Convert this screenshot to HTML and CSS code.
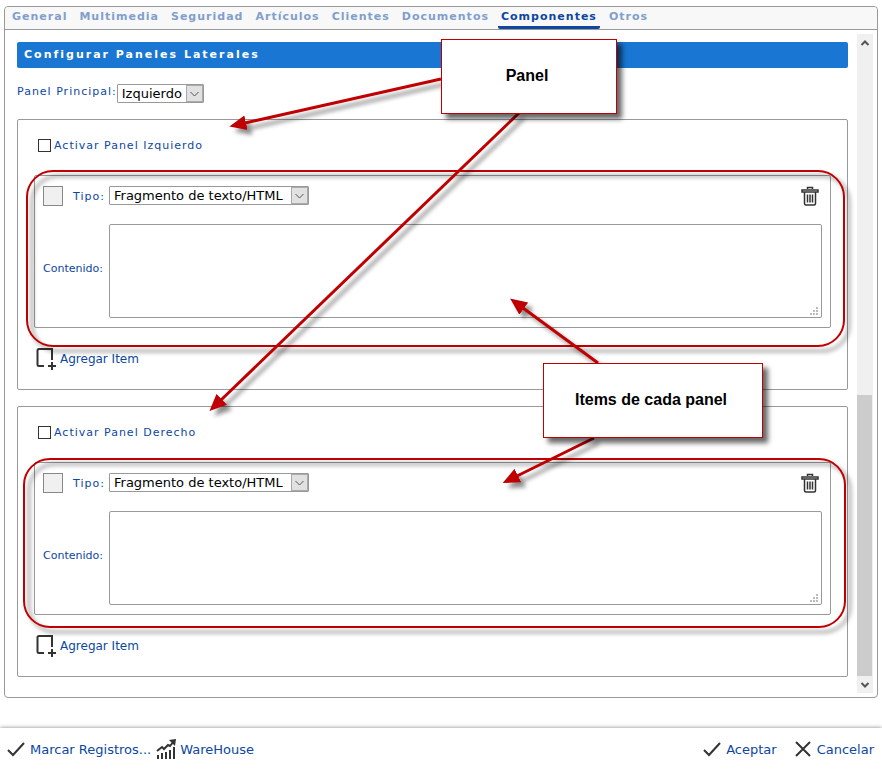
FILE: index.html
```html
<!DOCTYPE html>
<html lang="es">
<head>
    <meta charset="UTF-8">
    <meta name="viewport" content="width=device-width, initial-scale=1.0">
    <title>Configurar Paneles Laterales</title>
    <link rel="stylesheet" href="styles.css">
</head>
<body>
    <main class="window">
        <nav class="tabs">
            <a href="#">General</a>
            <a href="#">Multimedia</a>
            <a href="#">Seguridad</a>
            <a href="#">Artículos</a>
            <a href="#">Clientes</a>
            <a href="#">Documentos</a>
            <a href="#" class="active">Componentes</a>
            <a href="#">Otros</a>
        </nav>
        <div class="window-body">
            <div class="content">
                <h1>Configurar Paneles Laterales</h1>
                <div class="main-panel">
                    <label for="mainPanel">Panel Principal:</label>
                    <span class="select-box">
                        <select id="mainPanel"><option>Izquierdo</option><option>Derecho</option></select>
                        <svg class="select-arrow" viewBox="0 0 15 15"><path d="M3.500 6l4 4 4-4"/></svg>
                    </span>
                </div>

                <section class="panel">
                    <div class="activate">
                        <input type="checkbox" id="activeLeft">
                        <label for="activeLeft">Activar Panel Izquierdo</label>
                    </div>
                    <div class="item">
                        <div class="item-type">
                            <button type="button" class="color" aria-label="Color"></button>
                            <label for="typeLeft">Tipo:</label>
                        </div>
                        <div class="item-head">
                            <span class="select-box wide">
                                <select id="typeLeft"><option>Fragmento de texto/HTML</option></select>
                                <svg class="select-arrow" viewBox="0 0 15 15"><path d="M3.500 6l4 4 4-4"/></svg>
                            </span>
                            <button type="button" class="delete" aria-label="Eliminar">
                                <svg viewBox="0 0 18 20"><path d="M6.500 3V1.500h5V3M1 4h16v2H1zM3.500 6v11.500q0 1.500 1.500 1.500h8q1.500 0 1.500-1.500V6M6.500 8.500v8M9 8.500v8M11.500 8.500v8"/></svg>
                            </button>
                        </div>
                        <label class="content-label" for="contentLeft">Contenido:</label>
                        <div class="text-box">
                            <textarea id="contentLeft"></textarea>
                            <svg class="grip" viewBox="0 0 8 8"><path d="M6 0h2v2H6zM3 3h2v2H3zM6 3h2v2H6zM0 6h2v2H0zM3 6h2v2H3zM6 6h2v2H6z"/></svg>
                        </div>
                    </div>
                    <button type="button" class="add-item">
                        <svg viewBox="0 0 20 22"><path d="M8 18H3q-1.500 0-1.500-1.500v-14Q1.500 1 3 1h13v11M16 14v8M12 18h8"/></svg>
                        Agregar Item
                    </button>
                </section>

                <section class="panel">
                    <div class="activate">
                        <input type="checkbox" id="activeRight">
                        <label for="activeRight">Activar Panel Derecho</label>
                    </div>
                    <div class="item">
                        <div class="item-type">
                            <button type="button" class="color" aria-label="Color"></button>
                            <label for="typeRight">Tipo:</label>
                        </div>
                        <div class="item-head">
                            <span class="select-box wide">
                                <select id="typeRight"><option>Fragmento de texto/HTML</option></select>
                                <svg class="select-arrow" viewBox="0 0 15 15"><path d="M3.500 6l4 4 4-4"/></svg>
                            </span>
                            <button type="button" class="delete" aria-label="Eliminar">
                                <svg viewBox="0 0 18 20"><path d="M6.500 3V1.500h5V3M1 4h16v2H1zM3.500 6v11.500q0 1.500 1.500 1.500h8q1.500 0 1.500-1.500V6M6.500 8.500v8M9 8.500v8M11.500 8.500v8"/></svg>
                            </button>
                        </div>
                        <label class="content-label" for="contentRight">Contenido:</label>
                        <div class="text-box">
                            <textarea id="contentRight"></textarea>
                            <svg class="grip" viewBox="0 0 8 8"><path d="M6 0h2v2H6zM3 3h2v2H3zM6 3h2v2H6zM0 6h2v2H0zM3 6h2v2H3zM6 6h2v2H6z"/></svg>
                        </div>
                    </div>
                    <button type="button" class="add-item">
                        <svg viewBox="0 0 20 22"><path d="M8 18H3q-1.500 0-1.500-1.500v-14Q1.500 1 3 1h13v11M16 14v8M12 18h8"/></svg>
                        Agregar Item
                    </button>
                </section>
            </div>
            <div class="scrollbar">
                <button type="button" aria-label="Subir"><svg viewBox="0 0 16 17"><path d="M4.500 11L8 7.500l3.500 3.500"/></svg></button>
                <div class="track"><div class="thumb"></div></div>
                <button type="button" aria-label="Bajar"><svg viewBox="0 0 16 17"><path d="M4.500 7L8 10.500 11.500 7"/></svg></button>
            </div>
        </div>
    </main>

    <footer class="actions">
        <button type="button">
            <svg viewBox="0 0 20 20"><path d="M2 11l5 5L18 4"/></svg>
            Marcar Registros...
        </button>
        <button type="button">
            <svg viewBox="0 0 20 20"><path d="M2 20v-4M6 20v-6M10 20v-7M14 20v-9M18 20V8M1 12l5-4 2 2 4-4 2 1 4-5"/><path class="fill" d="M13 1l7-1-1 7z"/></svg>
            WareHouse
        </button>
        <button type="button" class="accept">
            <svg viewBox="0 0 20 20"><path d="M2 11l5 5L18 4"/></svg>
            Aceptar
        </button>
        <button type="button">
            <svg viewBox="0 0 20 20"><path d="M3 3l14 14M17 3L3 17"/></svg>
            Cancelar
        </button>
    </footer>

    <!-- notes drawn over the form -->
    <svg class="notes" viewBox="0 0 882 770">
        <defs>
            <marker id="head" markerUnits="userSpaceOnUse" markerWidth="18" markerHeight="16" refX="1" refY="8" orient="auto">
                <path d="M0 0.500L17 8 0 15.500z" fill="#c00000"/>
            </marker>
        </defs>
        <g class="outlines">
            <rect x="27" y="171" width="817" height="175" rx="26"/>
            <rect x="24" y="459" width="821" height="168" rx="26"/>
        </g>
        <g class="arrows">
            <path d="M441 79L245 123"/>
            <path d="M519 113L221 400"/>
            <path d="M598 363L523 308"/>
            <path d="M594 438L517 476"/>
        </g>
    </svg>
    <div class="callout callout-panel">Panel</div>
    <div class="callout callout-items">Items de cada panel</div>
</body>
</html>
```

FILE: styles.css
```css
* {
    box-sizing: border-box;
}

body {
    position: relative;
    display: flex;
    flex-direction: column;
    min-height: 100vh;
    margin: 0;
    background: #fff;
    color: #0d47a1;
    font-family: Verdana, "DejaVu Sans", sans-serif;
    font-size: 11px;
}

button, select, textarea {
    font-family: inherit;
    margin: 0;
    padding: 0;
}

button {
    border: none;
    background: none;
    color: inherit;
    cursor: pointer;
}

svg {
    display: block;
    fill: none;
    stroke: #333;
    stroke-width: 2;
}

.window {
    flex: 1;
    display: flex;
    flex-direction: column;
    margin: 6px 4px 30px;
    border: 1px solid #999;
    border-radius: 4px;
}

.tabs {
    display: flex;
    height: 23px;
    gap: 6px;
    padding: 0 4px;
    background: #f8f8f8;
    border-bottom: 1px solid #999;
    border-radius: 4px 4px 0 0;
}

.tabs a {
    padding: 0 3px;
    color: #819fcc;
    font-weight: bold;
    letter-spacing: 1px;
    line-height: 20px;
    text-decoration: none;
}

.tabs .active {
    color: #0d47a1;
    border-bottom: 3px solid #0d47a1;
    border-radius: 2px;
}

.window-body {
    flex: 1;
    display: flex;
    gap: 9px;
    padding: 4px 4px 4px 12px;
}

.content {
    flex: 1;
    display: flex;
    flex-direction: column;
    gap: 16px;
    padding-top: 8px;
}

h1 {
    margin: 0;
    padding: 0 7px;
    background: #1976d2;
    border-radius: 2px;
    color: #fff;
    font-size: 11px;
    letter-spacing: 2px;
    line-height: 26px;
}

.main-panel {
    display: flex;
    line-height: 16px;
}

label {
    letter-spacing: 1px;
}

.select-box {
    position: relative;
    display: block;
    width: 87px;
    height: 19px;
}

.select-box.wide {
    width: 200px;
}

select {
    appearance: none;
    display: block;
    width: 100%;
    height: 100%;
    padding-left: 4px;
    border: 1px solid #999;
    border-radius: 1px;
    background: #fff;
    color: #000;
    font-size: 13px;
}

.select-arrow {
    position: absolute;
    top: 1px;
    right: 1px;
    width: 17px;
    height: 17px;
    background: #e1e1e1;
    border: 1px solid #aaa;
    stroke: #555;
    stroke-width: 1;
    pointer-events: none;
}

.panel {
    padding: 19px 16px;
    border: 1px solid #999;
    border-radius: 2px;
}

.activate {
    display: flex;
    align-items: center;
    gap: 3px;
    height: 13px;
    margin: 0 4px 23px;
}

.activate input {
    appearance: none;
    width: 13px;
    height: 13px;
    margin: 0;
    border: 1px solid #333;
    background: #fff;
}

.activate input:checked {
    background: #1976d2;
}

.item {
    display: grid;
    grid-template-columns: 66px 1fr;
    row-gap: 18px;
    padding: 10px 8px 9px;
    border: 1px solid #999;
    border-radius: 2px;
}

.item-type {
    display: flex;
    align-items: center;
    gap: 10px;
}

.color {
    width: 20px;
    height: 20px;
    background: #f0f0f0;
    border: 1px solid #888;
}

.item-head {
    display: flex;
    justify-content: space-between;
}

.delete {
    margin-right: 3px;
}

.delete svg {
    width: 18px;
    height: 20px;
    stroke-width: 1.5;
}

.content-label {
    align-self: center;
    padding-bottom: 6px;
    letter-spacing: normal;
    white-space: nowrap;
}

.text-box {
    position: relative;
    height: 94px;
}

textarea {
    display: block;
    width: 100%;
    height: 100%;
    border: 1px solid #999;
    border-radius: 2px;
    resize: none;
}

.grip {
    position: absolute;
    right: 4px;
    bottom: 3px;
    width: 8px;
    height: 8px;
    fill: #bbb;
    stroke: none;
    pointer-events: none;
}

.add-item {
    display: flex;
    align-items: center;
    gap: 4px;
    margin: 20px 0 0 2px;
    font-size: 12px;
}

.add-item svg {
    width: 20px;
    height: 22px;
}

.scrollbar {
    display: flex;
    flex-direction: column;
    width: 16px;
    background: #f0f0f0;
}

.scrollbar svg {
    width: 16px;
    height: 17px;
    stroke: #555;
}

.track {
    flex: 1;
    display: flex;
    flex-direction: column;
    justify-content: flex-end;
}

.thumb {
    width: 15px;
    height: 45%;
    background: #ccc;
}

.actions {
    display: flex;
    align-items: center;
    gap: 5px;
    height: 42px;
    padding: 0 8px 0 6px;
    background: #fff;
    box-shadow: 0 0 4px rgba(0, 0, 0, 0.5);
}

.actions button {
    display: flex;
    align-items: center;
    gap: 4px;
    font-size: 13px;
}

.actions svg {
    width: 20px;
    height: 20px;
}

.actions .fill {
    fill: #333;
    stroke: none;
}

.actions .accept {
    margin-left: auto;
    margin-right: 11px;
}

.notes {
    position: absolute;
    top: 0;
    left: 0;
    width: 882px;
    height: 770px;
    pointer-events: none;
}

.outlines {
    stroke: #c00000;
    stroke-width: 2;
    filter: drop-shadow(5px 5px 2px rgba(0, 0, 0, 0.5));
}

.arrows {
    stroke: #c00000;
    stroke-width: 3;
    filter: drop-shadow(5px 5px 2px rgba(0, 0, 0, 0.45));
}

.arrows path {
    marker-end: url(#head);
}

marker path {
    stroke: none;
}

.callout {
    position: absolute;
    display: flex;
    align-items: center;
    justify-content: center;
    height: 75px;
    padding: 0 4px 2px 0;
    background: #fff;
    border: 1px solid #c00000;
    box-shadow: 5px 5px 5px rgba(0, 0, 0, 0.6);
    color: #000;
    font-family: Arial, "Liberation Sans", sans-serif;
    font-size: 16px;
    font-weight: bold;
}

.callout-panel {
    top: 39px;
    left: 441px;
    width: 176px;
}

.callout-items {
    top: 363px;
    left: 543px;
    width: 220px;
}
```
